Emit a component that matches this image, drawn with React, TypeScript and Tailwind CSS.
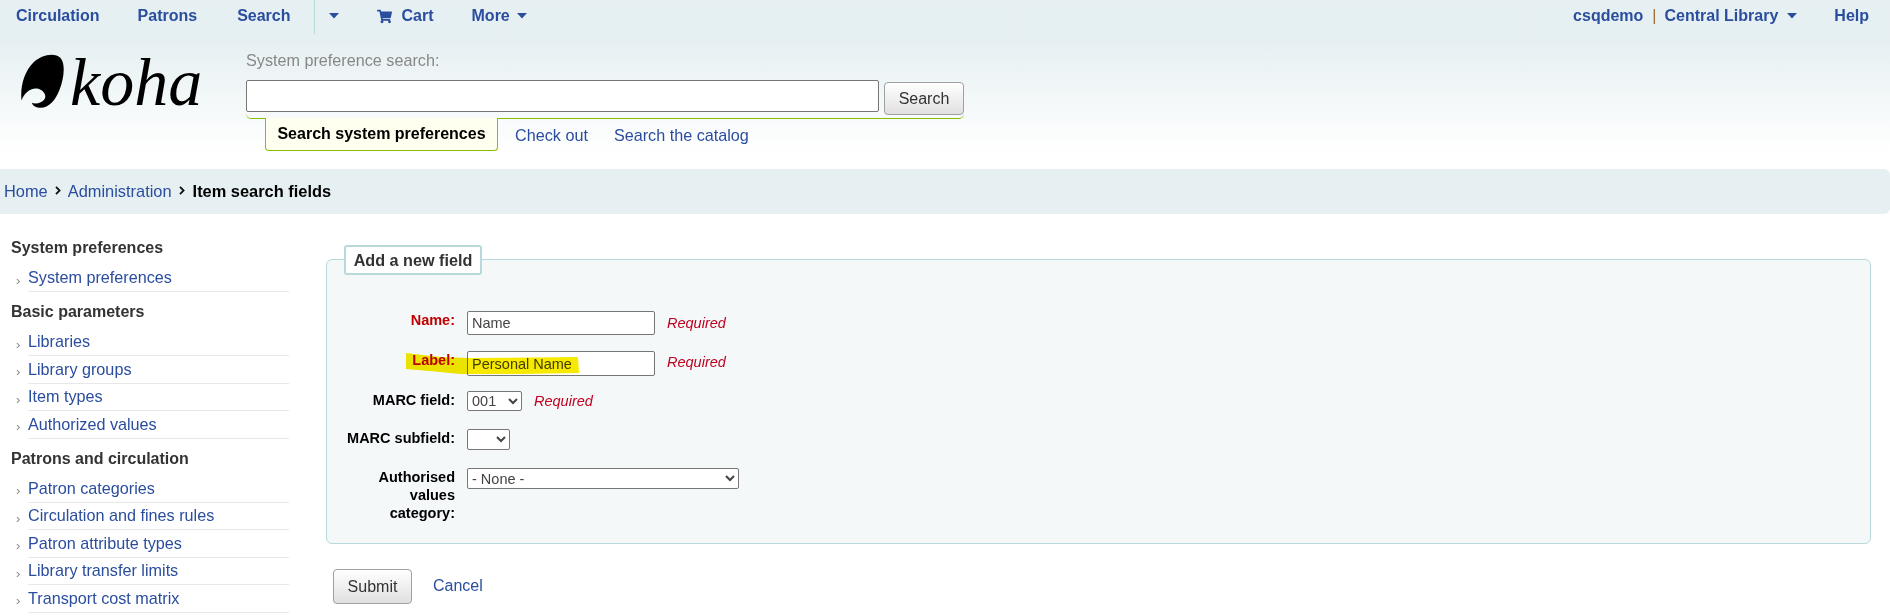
import { FaShoppingCart } from "react-icons/fa";

const LINK = "text-[#2a4d9e]";

const Caret = ({ className = "" }: { className?: string }) => (
  <svg width="10" height="6" viewBox="0 0 10 6" className={className}>
    <path d="M0 0h10L5 5.5z" fill="#2a4d9e" />
  </svg>
);

const Chevron = () => (
  <svg width="6" height="9" viewBox="0 0 6 9" className="mx-[7px] mb-[3px] shrink-0">
    <path d="M1 .8L4.6 4.5L1 8.2" fill="none" stroke="#111" strokeWidth="1.8" />
  </svg>
);

const KohaMark = () => (
  <svg width="44" height="54" viewBox="62 42 132 163" className="shrink-0">
    <path
      d="M66 182C62 140 74 96 102 68C126 44 166 36 184 54C200 72 194 118 180 152C168 182 148 206 120 204C108 203 100 198 97 190C112 194 128 190 136 178C143 164 130 148 112 146C92 144 74 160 66 182Z"
      fill="#000"
    />
  </svg>
);

const sidebar = [
  { title: "System preferences", items: ["System preferences"] },
  {
    title: "Basic parameters",
    items: ["Libraries", "Library groups", "Item types", "Authorized values"],
  },
  {
    title: "Patrons and circulation",
    items: [
      "Patron categories",
      "Circulation and fines rules",
      "Patron attribute types",
      "Library transfer limits",
      "Transport cost matrix",
    ],
  },
];

const Required = ({ className = "" }: { className?: string }) => (
  <span className={`text-[14.5px] italic text-[#c00020] ${className}`}>Required</span>
);

const FieldLabel = ({ children, red }: { children: React.ReactNode; red?: boolean }) => (
  <label
    className={`w-[128px] shrink-0 text-right text-[14.5px] font-bold leading-[18px] ${
      red ? "text-[#c00000]" : "text-black"
    }`}
  >
    {children}
  </label>
);

export default function App() {
  return (
    <div className="relative h-[616px] overflow-hidden bg-white font-['Liberation_Sans',Arial,sans-serif] text-[#333]">
      {/* header */}
      <div className="h-[169px] bg-linear-to-b from-[#e6f0f2] from-[25%] to-white to-[90%]">
        <div className="flex h-[34px] items-center pb-[2px] text-[16px] font-bold">
          <a className={`ml-[16px] ${LINK}`}>Circulation</a>
          <a className={`ml-[38px] ${LINK}`}>Patrons</a>
          <a className={`ml-[40px] ${LINK}`}>Search</a>
          <span className="mb-[-2px] ml-[23px] h-[34px] w-px bg-[#b9d8d9]" />
          <Caret className="ml-[14px]" />
          <FaShoppingCart className="ml-[38px] text-[#2a4d9e]" size={15} />
          <a className={`ml-[10px] ${LINK}`}>Cart</a>
          <a className={`ml-[38px] ${LINK}`}>More</a>
          <Caret className="ml-[7px]" />
          <div className="ml-auto flex items-center pr-[21px]">
            <span className={LINK}>csqdemo</span>
            <span className="ml-[9px] font-normal text-[#a06a30]">|</span>
            <a className={`ml-[8px] ${LINK}`}>Central Library</a>
            <Caret className="ml-[9px]" />
            <a className={`ml-[37px] ${LINK}`}>Help</a>
          </div>
        </div>
        <div className="flex">
          <div className="ml-[20px] mt-[20px] flex h-[56px] w-[226px] items-start">
            <KohaMark />
            <span className="ml-[6px] mt-[-11px] font-['Liberation_Serif',serif] text-[68px] italic leading-[78px] text-black">
              koha
            </span>
          </div>
          <div className="w-[718px]">
            <div className="mt-[16px] h-[20px] text-[16.2px] leading-[20px] text-[#888]">
              System preference search:
            </div>
            <div className="mt-[10px] flex h-[39px] items-start rounded-b-[5px] border-b border-[#88c000]">
              <input className="h-[32px] w-[633px] rounded-[2px] border border-[#767676] bg-white" />
              <button className="ml-[5px] mt-[2px] h-[33px] w-[80px] rounded-[4px] border border-[#a0a0a0] bg-linear-to-b from-white to-[#e0e0e0] text-[16px] text-[#333]">
                Search
              </button>
            </div>
            <div className="flex items-start">
              <div className="ml-[19px] mt-[-1px] flex h-[33px] w-[233px] items-center justify-center rounded-b-[4px] border border-t-0 border-[#88c000] bg-[#ffffef] text-[16px] font-bold text-black">
                Search system preferences
              </div>
              <a className={`ml-[17px] mt-[6px] text-[16.2px] leading-[20px] ${LINK}`}>Check out</a>
              <a className={`ml-[26px] mt-[6px] text-[16.2px] leading-[20px] ${LINK}`}>Search the catalog</a>
            </div>
          </div>
        </div>
      </div>

      {/* breadcrumb */}
      <div className="flex h-[45px] items-center rounded-r-[6px] bg-[#e6f0f2] pl-[4px] text-[16.4px]">
        <a className={LINK}>Home</a>
        <Chevron />
        <a className={LINK}>Administration</a>
        <Chevron />
        <span className="ml-px font-bold text-black">Item search fields</span>
      </div>

      <div className="flex">
        {/* sidebar */}
        <div className="mt-[23px] w-[289px] shrink-0">
          {sidebar.map((group) => (
            <div key={group.title} className="mb-[9px]">
              <h5 className="ml-[11px] h-[22px] text-[16px] font-bold leading-[22px] text-[#333]">
                {group.title}
              </h5>
              <ul className="mt-[5.5px]">
                {group.items.map((item) => (
                  <li key={item} className="flex h-[27.5px]">
                    <span className="w-[28px] pl-[16px] pt-[5px] text-[13px] leading-[22px] text-[#888]">›</span>
                    <a
                      className={`flex-1 border-b border-[#e8e8e8] pt-[2.5px] text-[16.2px] leading-[20px] ${LINK}`}
                    >
                      {item}
                    </a>
                  </li>
                ))}
              </ul>
            </div>
          ))}
        </div>

        {/* form */}
        <div className="ml-[37px] w-[1545px]">
          <div className="relative mt-[45px] h-[285px] rounded-[6px] border border-[#b9d8d9] bg-[#f4f8f9]">
            <div className="absolute left-[17px] top-[-15px] flex h-[30px] w-[138px] items-center justify-center rounded-[3px] border-2 border-[#b9d8d9] bg-white text-[16.2px] font-bold text-[#333]">
              Add a new field
            </div>
            <div className="flex flex-col pt-[51px]">
              <div className="flex h-[24px]">
                <FieldLabel red>Name:</FieldLabel>
                <input
                  defaultValue="Name"
                  className="ml-[12px] h-[24px] w-[188px] rounded-[2px] border border-[#767676] bg-white px-[4px] text-[14.5px] text-[#444]"
                />
                <Required className="ml-[12px] leading-[24px]" />
              </div>
              <div className="mt-[16px] flex h-[25px]">
                <FieldLabel red>Label:</FieldLabel>
                <input
                  defaultValue="Personal Name"
                  className="ml-[12px] h-[25px] w-[188px] rounded-[2px] border border-[#767676] bg-white px-[4px] text-[14.5px] text-[#444]"
                />
                <Required className="ml-[12px] leading-[23px]" />
              </div>
              <div className="mt-[15px] flex h-[20px]">
                <FieldLabel>MARC field:</FieldLabel>
                <select className="ml-[12px] h-[20px] w-[55px] rounded-[2px] border border-[#767676] bg-white text-[14.5px] text-[#444]">
                  <option>001</option>
                </select>
                <Required className="ml-[12px] leading-[20px]" />
              </div>
              <div className="mt-[18px] flex h-[21px]">
                <FieldLabel>MARC subfield:</FieldLabel>
                <select className="ml-[12px] h-[21px] w-[43px] rounded-[2px] border border-[#767676] bg-white text-[14.5px] text-[#444]">
                  <option></option>
                </select>
              </div>
              <div className="mt-[18px] flex">
                <FieldLabel>
                  Authorised
                  <br />
                  values
                  <br />
                  category:
                </FieldLabel>
                <select className="ml-[12px] h-[21px] w-[272px] rounded-[2px] border border-[#767676] bg-white text-[14.5px] text-[#444]">
                  <option>- None -</option>
                </select>
              </div>
            </div>
          </div>
          <div className="mt-[25px] flex items-center">
            <button className="ml-[7px] h-[35px] w-[79px] rounded-[4px] border border-[#a0a0a0] bg-linear-to-b from-white to-[#e0e0e0] text-[16px] text-[#333]">
              Submit
            </button>
            <a className={`ml-[21px] mb-[1px] text-[16px] ${LINK}`}>Cancel</a>
          </div>
        </div>
      </div>

      {/* highlighter stroke over the Label row */}
      <svg className="pointer-events-none absolute left-[400px] top-[345px] mix-blend-multiply" width="190" height="35" viewBox="0 0 190 35">
        <path d="M6 8L40 12L70 13L178 12L179 28L120 29L60 29L40 27L6 24Z" fill="#f7e900" />
      </svg>
    </div>
  );
}
